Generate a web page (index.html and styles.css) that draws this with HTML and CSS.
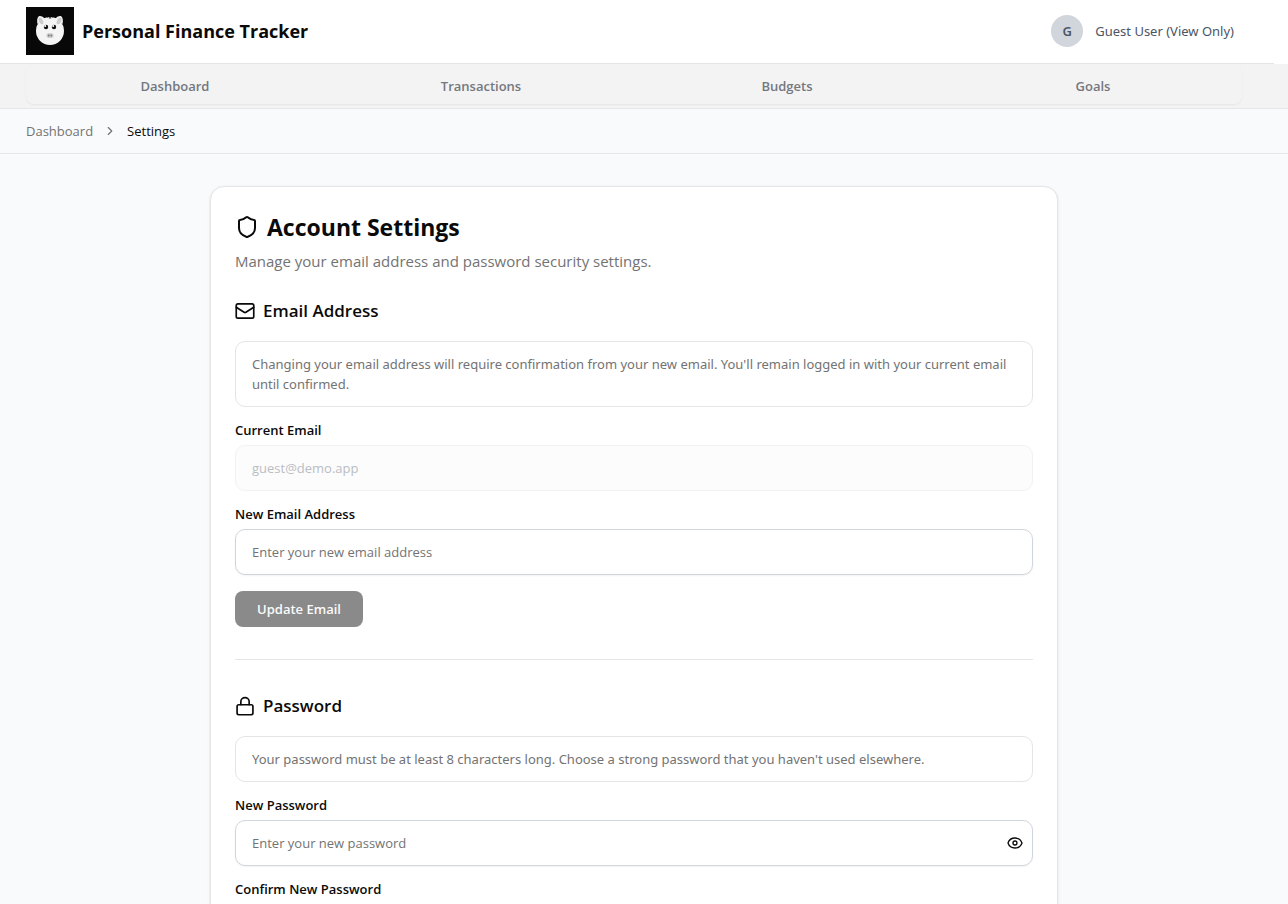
FILE: index.html
```html
<!DOCTYPE html>
<html lang="en">
<head>
<meta charset="utf-8">
<meta name="viewport" content="width=device-width, initial-scale=1">
<title>Settings - Personal Finance Tracker</title>
<link rel="stylesheet" href="styles.css">
</head>
<body>
<header class="header">
  <div class="header-inner">
    <a class="brand" href="#">
      <svg class="logo" viewBox="0 0 48 48" aria-hidden="true">
        <rect width="48" height="48" fill="#080808"/>
        <path d="M11.500 17c-.8-3-.3-6.500 1-7.500 2-1.200 4.500.2 6.500 2.500z" fill="#eee"/>
        <path d="M36.500 17c.8-3 .3-6.500-1-7.500-2-1.200-4.500.2-6.500 2.500z" fill="#eee"/>
        <circle cx="24" cy="24" r="14" fill="#f4f4f4"/>
        <ellipse cx="15" cy="14" rx="2" ry="3.500" transform="rotate(-25 15 14)" fill="#ccc"/>
        <ellipse cx="33" cy="14" rx="2" ry="3.500" transform="rotate(25 33 14)" fill="#ccc"/>
        <path d="M20.500 10.300h1.500l.5 1zM23.200 10h1.600v1.500h-1.600zM27.500 10.300H26l-.5 1z" fill="#222"/>
        <circle cx="20" cy="20" r="2.200" fill="#111"/>
        <circle cx="28" cy="20" r="2.200" fill="#111"/>
        <circle cx="19.200" cy="18.900" r="1" fill="#fff"/>
        <circle cx="27.200" cy="18.900" r="1" fill="#fff"/>
        <ellipse cx="24" cy="28.500" rx="3.600" ry="2.600" fill="#ccc"/>
        <circle cx="22.700" cy="28.500" r=".9" fill="#777"/>
        <circle cx="25.300" cy="28.500" r=".9" fill="#777"/>
      </svg>
      <span>Personal Finance Tracker</span>
    </a>
    <div class="user"><span class="avatar">G</span><span>Guest User (View Only)</span></div>
  </div>
</header>
<nav class="nav" aria-label="Main">
  <div class="tabs">
    <a href="#">Dashboard</a><a href="#">Transactions</a><a href="#">Budgets</a><a href="#">Goals</a>
  </div>
</nav>
<nav class="crumbs" aria-label="Breadcrumb">
  <a href="#">Dashboard</a>
  <svg class="icon chevron" viewBox="0 0 24 24" aria-hidden="true"><path d="m9 18 6-6-6-6"/></svg>
  <span aria-current="page">Settings</span>
</nav>
<main class="main">
  <div class="card">
    <div class="card-head">
      <h1><svg class="icon icon-lg" viewBox="0 0 24 24" aria-hidden="true"><path d="M20 13c0 5-3.500 7.500-7.660 8.950a1 1 0 0 1-.67-.01C7.500 20.500 4 18 4 13V6a1 1 0 0 1 1-1c2 0 4.500-1.200 6.240-2.720a1.170 1.170 0 0 1 1.520 0C14.510 3.810 17 5 19 5a1 1 0 0 1 1 1z"/></svg>Account Settings</h1>
      <p>Manage your email address and password security settings.</p>
    </div>
    <form class="section">
      <h2><svg class="icon icon-md" viewBox="0 0 24 24" aria-hidden="true"><rect width="21" height="17" x="1.500" y="3.500" rx="2"/><path d="m1.500 7.500 9.400 6a2 2 0 0 0 2.200 0l9.400-6"/></svg>Email Address</h2>
      <p class="note">Changing your email address will require confirmation from your new email. You'll remain logged in with your current email until confirmed.</p>
      <div class="field">
        <label for="current-email">Current Email</label>
        <input id="current-email" type="email" value="guest@demo.app" disabled>
      </div>
      <div class="field">
        <label for="new-email">New Email Address</label>
        <input id="new-email" type="email" placeholder="Enter your new email address">
      </div>
      <button class="submit" type="submit" disabled>Update Email</button>
    </form>
    <hr>
    <form class="section">
      <h2><svg class="icon icon-md" viewBox="0 0 24 24" aria-hidden="true"><rect width="19" height="12" x="2.500" y="10.500" rx="2"/><path d="M7 10.500V7a5 5 0 0 1 10 0v3.500"/></svg>Password</h2>
      <p class="note">Your password must be at least 8 characters long. Choose a strong password that you haven't used elsewhere.</p>
      <div class="field">
        <label for="new-password">New Password</label>
        <div class="password">
          <input id="new-password" type="password" placeholder="Enter your new password">
          <button class="reveal" type="button" aria-label="Show password"><svg class="icon icon-sm" viewBox="0 0 24 24" aria-hidden="true"><path d="M1.500 12C3 7.500 7 4.500 12 4.500S21 7.500 22.500 12C21 16.500 17 19.500 12 19.500S3 16.500 1.500 12z"/><circle cx="12" cy="12" r="3"/></svg></button>
        </div>
      </div>
      <div class="field">
        <label for="confirm-password">Confirm New Password</label>
        <input id="confirm-password" type="password">
      </div>
    </form>
  </div>
</main>
</body>
</html>
```
FILE: styles.css
```css
* { box-sizing: border-box; }
body {
  margin: 0;
  height: 100vh;
  overflow: hidden;
  display: flex;
  flex-direction: column;
  background: #f9fafb;
  color: #0a0a0a;
  font: 14px/20px "Segoe UI", "Open Sans", sans-serif;
}
h1, h2, p { margin: 0; }
a { color: inherit; text-decoration: none; }
.header, .nav, .crumbs { flex: none; }
.header { background: #fff; }
.header-inner {
  display: flex;
  align-items: center;
  justify-content: space-between;
  height: 64px;
  margin-right: 14px;
  padding: 0 40px 2px 26px;
  border-bottom: 1px solid #e5e5e5;
}
.brand { display: flex; align-items: center; gap: 8px; font-size: 18px; line-height: 28px; font-weight: 700; }
.logo { width: 48px; height: 48px; }
.user { display: flex; align-items: center; gap: 12px; color: #4a5565; font-size: 13px; }
.user, .note { font-family: "Segoe UI", "Noto Sans", sans-serif; }
.avatar {
  display: grid;
  place-items: center;
  width: 32px;
  height: 32px;
  border-radius: 50%;
  background: #d1d5dc;
  font-weight: 600;
}
.nav { padding: 0 46px 4px 26px; background: #f3f3f3; border-bottom: 1px solid #e5e7eb; }
.tabs {
  display: grid;
  grid-template-columns: repeat(4, 1fr);
  gap: 8px;
  border-radius: 8px;
  box-shadow: 0 1px 2px rgba(0, 0, 0, .06);
}
.tabs a { padding: 12px 6px 8px; text-align: center; font-size: 13px; font-weight: 600; color: #737780; }
.crumbs {
  display: flex;
  align-items: center;
  gap: 10px;
  height: 45px;
  padding: 0 26px;
  border-bottom: 1px solid #e5e7eb;
  font-size: 13px;
}
.crumbs a, .crumbs .chevron { color: #737373; }
.chevron { width: 14px; height: 14px; }
.icon { flex: none; fill: none; stroke: currentColor; stroke-width: 2; stroke-linecap: round; stroke-linejoin: round; }
.icon-lg { width: 24px; height: 24px; }
.icon-md { width: 20px; height: 20px; }
.icon-sm { display: block; width: 16px; height: 16px; }
.main { flex: 1; min-height: 0; overflow: auto; scrollbar-width: none; padding: 32px 20px 32px 0; }
.card {
  max-width: 848px;
  margin: 0 auto;
  padding: 24px;
  background: #fff;
  border: 1px solid #e5e5e5;
  border-radius: 14px;
  box-shadow: 0 1px 3px rgba(0, 0, 0, .1);
}
.card-head { display: grid; gap: 6px; margin-bottom: 24px; color: #737373; font-size: 15px; line-height: 24px; }
h1, h2 { display: flex; align-items: center; gap: 8px; color: #0a0a0a; font-weight: 600; }
h1 { font-size: 23px; line-height: 32px; font-weight: 700; }
h2 { font-size: 17px; line-height: 28px; }
.section { display: grid; gap: 16px; }
.note { padding: 12px 16px; border: 1px solid #e5e5e5; border-radius: 10px; color: #737373; font-size: 13px; }
.field { display: grid; gap: 8px; }
label { font-size: 13px; line-height: 14px; font-weight: 600; }
input {
  width: 100%;
  height: 46px;
  padding: 0 16px;
  border: 1px solid #d1d5dc;
  border-radius: 10px;
  background: #fff;
  box-shadow: 0 1px 2px rgba(0, 0, 0, .05);
  font: inherit;
  font-size: 13px;
  color: #0a0a0a;
}
input::placeholder { color: #737373; opacity: 1; }
input:disabled { background: #fcfcfc; border-color: #f2f2f2; color: #babdc4; box-shadow: none; }
.submit {
  justify-self: start;
  width: 128px;
  height: 36px;
  padding: 0;
  border: 0;
  border-radius: 8px;
  background: #8a8a8a;
  color: #fafafa;
  font: inherit;
  font-size: 13px;
  font-weight: 600;
}
.password { position: relative; }
.password input { padding-right: 44px; }
.reveal {
  position: absolute;
  top: 11px;
  right: 6px;
  padding: 4px;
  border: 0;
  background: none;
  color: #0a0a0a;
}
hr { width: 100%; height: 1px; margin: 32px 0; border: 0; background: #e5e5e5; }
```
